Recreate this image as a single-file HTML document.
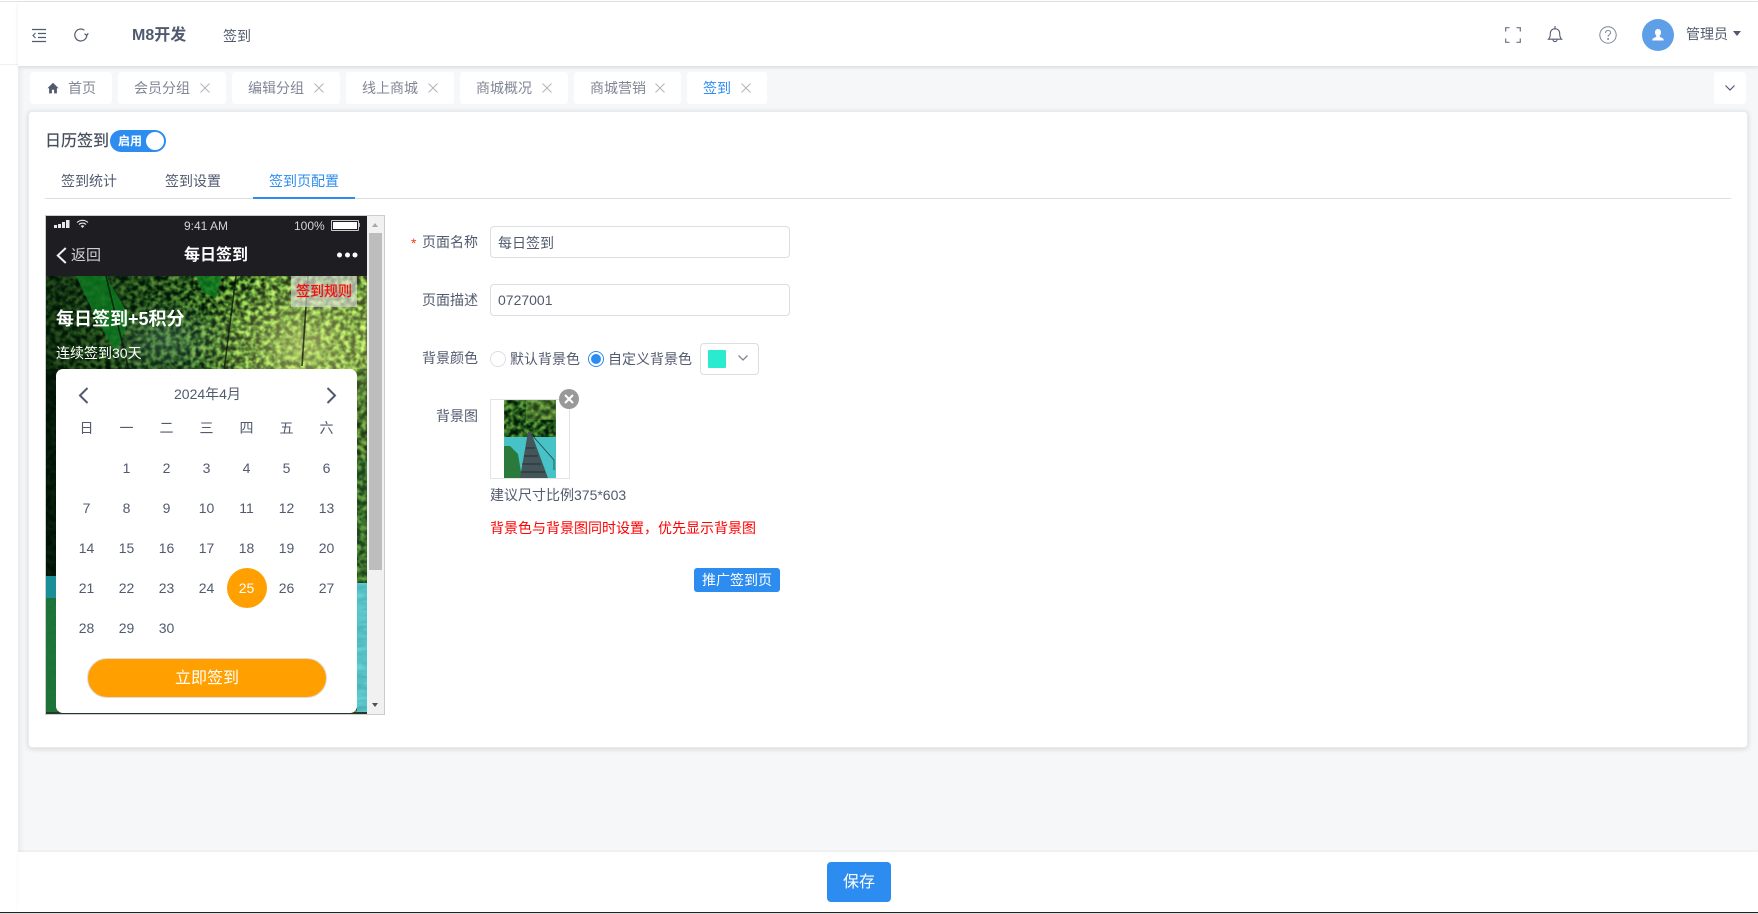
<!DOCTYPE html>
<html lang="zh">
<head>
<meta charset="utf-8">
<title>签到</title>
<style>
html,body{margin:0;padding:0;width:1758px;height:914px;overflow:hidden;background:#fff;}
body{position:relative;font-family:"Liberation Sans","Noto Sans CJK SC",sans-serif;font-size:14px;color:#515a6e;}
.a{position:absolute;}
.t{position:absolute;white-space:nowrap;line-height:20px;height:20px;}
.tag{position:absolute;top:72px;height:32px;background:#fff;border-radius:3px;}
.tag span{position:absolute;top:6px;line-height:20px;white-space:nowrap;color:#808695;}
.tag svg{position:absolute;top:11px;}
.lbl{position:absolute;right:1280px;white-space:nowrap;line-height:20px;height:20px;color:#515a6e;}
.inp{position:absolute;left:490px;width:298px;height:30px;border:1px solid #dcdee2;border-radius:4px;background:#fff;line-height:30px;padding:0;text-indent:7px;color:#515a6e;}
.cal{position:absolute;left:66.5px;top:408px;width:280px;display:grid;grid-template-columns:repeat(7,40px);grid-auto-rows:40px;color:#515a6e;text-align:center;line-height:40px;}
</style>
</head>
<body>
<svg width="0" height="0" style="position:absolute">
<defs>
<filter id="leaf" x="0" y="0" width="100%" height="100%" color-interpolation-filters="sRGB">
<feTurbulence type="fractalNoise" baseFrequency=".2" numOctaves="4" seed="11"/>
<feColorMatrix values="2.1 0 0 0 -.78  2.7 0 0 0 -.88  1.1 0 0 0 -.4  0 0 0 0 1"/>
<feGaussianBlur stdDeviation=".5"/>
</filter>
<filter id="water" x="0" y="0" width="100%" height="100%" color-interpolation-filters="sRGB">
<feTurbulence type="fractalNoise" baseFrequency=".05 .2" numOctaves="2" seed="3"/>
<feColorMatrix values=".2 0 0 0 .24  .2 0 0 0 .66  .2 0 0 0 .68  0 0 0 0 1"/>
</filter>
<linearGradient id="shade" x1="0" y1="0" x2="1" y2="0">
<stop offset="0" stop-color="#001a08" stop-opacity=".8"/>
<stop offset=".4" stop-color="#00240f" stop-opacity=".5"/>
<stop offset=".62" stop-color="#0a3010" stop-opacity=".12"/>
<stop offset="1" stop-color="#d0e070" stop-opacity=".25"/>
</linearGradient>
<radialGradient id="glow"><stop offset="0" stop-color="#e2f08a" stop-opacity=".62"/><stop offset="1" stop-color="#d7ea80" stop-opacity="0"/></radialGradient>
<radialGradient id="mid"><stop offset="0" stop-color="#8fc6a0" stop-opacity=".3"/><stop offset="1" stop-color="#8fc6a0" stop-opacity="0"/></radialGradient>
</defs>
</svg>

<!-- page chrome -->
<div class="a" style="left:0;top:1px;width:1758px;height:1px;background:#e4e4e4"></div>
<div class="a" style="left:0;top:64px;width:18px;height:1px;background:#f0f0f0"></div>
<div class="a" style="left:18px;top:66px;width:1740px;height:786px;background:#f5f7f9;box-shadow:inset 3px 2px 4px rgba(0,21,41,.05)"></div>
<div class="a" style="left:18px;top:2px;width:1740px;height:64px;background:#fff;box-shadow:0 1px 4px rgba(0,21,41,.08)"></div>

<!-- header left -->
<svg class="a" style="left:32px;top:28px" width="15" height="15" viewBox="0 0 15 15" fill="none" stroke="#515a6e" stroke-width="1.2">
<path d="M0 1.5h14M6 5.5h8M6 9.5h8M0 13.5h14"/><path d="M3.5 5 1 7.5 3.5 10" stroke-width="1.1"/>
</svg>
<svg class="a" style="left:73px;top:27px" width="16" height="16" viewBox="0 0 16 16" fill="none" stroke="#515a6e" stroke-width="1.2">
<path d="M13.8 8a6 6 0 1 1-2.400-4.800"/><path d="M15.300 6.300 13.700 8.400 11.500 6.700"/>
</svg>
<div class="t" style="left:132px;top:26px;font-size:16px;font-weight:bold;color:#515a6e">M8开发</div>
<div class="t" style="left:223px;top:26px">签到</div>

<!-- header right -->
<svg class="a" style="left:1505px;top:27px" width="16" height="16" viewBox="0 0 16 16" fill="none" stroke="#6a7284" stroke-width="1.200">
<path d="M.7 4.5V.7h3.8M11.5.7h3.8v3.8M15.3 11.5v3.8h-3.8M4.5 15.3H.7v-3.8"/>
</svg>
<svg class="a" style="left:1547px;top:25px" width="16" height="18" viewBox="0 0 16 18" fill="none" stroke="#515a6e" stroke-width="1.1">
<path d="M1.5 14.2c1.4-1.3 1.8-2.6 1.8-5.4 0-3 1.8-5 4.7-5s4.7 2 4.7 5c0 2.8.4 4.1 1.8 5.4z"/>
<path d="M8 1v2.8M6 14.6c0 1.2.9 2 2 2s2-.8 2-2"/>
</svg>
<svg class="a" style="left:1599px;top:26px" width="18" height="18" viewBox="0 0 18 18" fill="none" stroke="#808695" stroke-width="1">
<circle cx="9" cy="9" r="8.2"/><path d="M6.5 7c.1-1.6 1.2-2.5 2.6-2.5 1.5 0 2.5 1 2.5 2.2 0 1.8-2.5 1.9-2.5 3.9"/><circle cx="9.1" cy="13" r=".5" fill="#808695"/>
</svg>
<div class="a" style="left:1642px;top:19px;width:32px;height:32px;border-radius:50%;background:#5e9fe8"></div>
<svg class="a" style="left:1651px;top:28px" width="14" height="14" viewBox="0 0 14 14" fill="#fff">
<path d="M7 1c2 0 3 1.500 3 3.500 0 1.500-.7 2.700-1.400 3.400 0 .6.200 1 .9 1.300 1.500.5 2.800 1 3.200 2.300v1H1.300v-1c.4-1.300 1.700-1.800 3.200-2.300.7-.3.900-.7.900-1.300C4.700 7.200 4 6 4 4.500 4 2.500 5 1 7 1z"/>
</svg>
<div class="t" style="left:1686px;top:24px;color:#515a6e">管理员</div>
<div class="a" style="left:1733px;top:31px;width:0;height:0;border-left:4px solid transparent;border-right:4px solid transparent;border-top:5px solid #515a6e"></div>

<!-- tags -->
<div class="tag" style="left:30px;width:82px">
<svg style="left:17px;top:10px" width="12" height="12" viewBox="0 0 12 12" fill="#515a6e"><path d="M6 .8 .4 6.200h1.700V11.400h2.800V7.800h2.200v3.600h2.800V6.200h1.700z"/></svg>
<span style="left:38px">首页</span></div>
<div class="tag" style="left:118px;width:108px"><span style="left:16px">会员分组</span><svg style="left:82px" width="10" height="10" viewBox="0 0 10 10" stroke="#b0b4bb" fill="none"><path d="M.5.500l9 9M9.500.5l-9 9"/></svg></div>
<div class="tag" style="left:232px;width:108px"><span style="left:16px">编辑分组</span><svg style="left:82px" width="10" height="10" viewBox="0 0 10 10" stroke="#b0b4bb" fill="none"><path d="M.5.500l9 9M9.500.5l-9 9"/></svg></div>
<div class="tag" style="left:346px;width:108px"><span style="left:16px">线上商城</span><svg style="left:82px" width="10" height="10" viewBox="0 0 10 10" stroke="#b0b4bb" fill="none"><path d="M.5.500l9 9M9.500.5l-9 9"/></svg></div>
<div class="tag" style="left:460px;width:108px"><span style="left:16px">商城概况</span><svg style="left:82px" width="10" height="10" viewBox="0 0 10 10" stroke="#b0b4bb" fill="none"><path d="M.5.500l9 9M9.500.5l-9 9"/></svg></div>
<div class="tag" style="left:574px;width:107px"><span style="left:16px">商城营销</span><svg style="left:81px" width="10" height="10" viewBox="0 0 10 10" stroke="#b0b4bb" fill="none"><path d="M.5.500l9 9M9.500.5l-9 9"/></svg></div>
<div class="tag" style="left:687px;width:80px"><span style="left:16px;color:#2d8cf0">签到</span><svg style="left:54px" width="10" height="10" viewBox="0 0 10 10" stroke="#b0b4bb" fill="none"><path d="M.5.500l9 9M9.500.5l-9 9"/></svg></div>
<div class="tag" style="left:1714px;width:32px"><svg style="left:11px;top:13px" width="10" height="6" viewBox="0 0 10 6" fill="none" stroke="#515a6e" stroke-width="1.2"><path d="M.5.500 5 5 9.500.5"/></svg></div>

<!-- card -->
<div class="a" style="left:28px;top:111px;width:1718px;height:635px;background:#fff;border:1px solid #e8eaec;border-radius:4px;box-shadow:0 1px 6px rgba(0,0,0,.14)"></div>
<div class="t" style="left:45px;top:132px;font-size:16px;color:#454c5c;-webkit-text-stroke:.2px #454c5c">日历签到</div>
<div class="a" style="left:110px;top:130px;width:56px;height:22px;border-radius:11px;background:#2d8cf0"></div>
<div class="a" style="left:146px;top:132px;width:18px;height:18px;border-radius:50%;background:#fff"></div>
<div class="t" style="left:118px;top:131px;font-size:12px;font-weight:bold;color:#fff">启用</div>
<div class="t" style="left:61px;top:171px">签到统计</div>
<div class="t" style="left:165px;top:171px">签到设置</div>
<div class="t" style="left:269px;top:171px;color:#2d8cf0">签到页配置</div>
<div class="a" style="left:45px;top:198px;width:1686px;height:1px;background:#dcdee2"></div>
<div class="a" style="left:253px;top:197px;width:102px;height:2px;background:#2d8cf0"></div>

<!-- phone -->
<div class="a" style="left:45px;top:215px;width:338px;height:498px;border:1px solid #ccc;background:#f1f1f1"></div>
<div class="a" style="left:46px;top:216px;width:321px;height:498px;overflow:hidden;background:#1e1d22">
<svg class="a" style="left:0;top:60px" width="321" height="438" viewBox="0 0 321 438">
<rect width="321" height="438" filter="url(#leaf)"/>
<rect width="321" height="438" fill="url(#shade)"/>
<ellipse cx="255" cy="70" rx="105" ry="85" fill="url(#glow)"/>
<ellipse cx="120" cy="65" rx="70" ry="40" fill="url(#mid)"/>
<path d="M30 0h30l24 42-14 34-18-30zM150 0h26l-6 22-14-6z" fill="#0e7a20" opacity=".8"/>
<path d="M190 0l-12 95M262 0l-6 90M60 0l28 115" stroke="#0a140a" stroke-width="1.600" opacity=".75" fill="none"/>
<rect x="0" y="93" width="12" height="207" fill="#000f06" opacity=".72"/>
<rect x="311" y="93" width="10" height="90" fill="#0d3a18" opacity=".35"/>
<rect x="311" y="183" width="10" height="125" fill="#0b4a1e" opacity=".5"/>
<rect x="311" y="307" width="10" height="131" filter="url(#water)"/>
<rect x="0" y="300" width="12" height="22" fill="#1a8f98"/>
<rect x="0" y="322" width="12" height="114" fill="#1f7a3c" opacity=".92"/>
<rect x="0" y="436" width="321" height="2" fill="#26382c"/>
</svg>
</div>
<div class="a" style="left:367px;top:216px;width:16px;height:498px;background:#f1f1f1"></div>
<div class="a" style="left:369px;top:233px;width:13px;height:337px;background:#bdbdbd"></div>
<div class="a" style="left:372px;top:223px;width:0;height:0;border-left:3.500px solid transparent;border-right:3.500px solid transparent;border-bottom:4px solid #a8a8a8"></div>
<div class="a" style="left:372px;top:703px;width:0;height:0;border-left:3.500px solid transparent;border-right:3.500px solid transparent;border-top:4px solid #505050"></div>

<!-- status bar -->
<svg class="a" style="left:54px;top:219px" width="36" height="11" viewBox="0 0 36 11" fill="#e8e8e8">
<rect x="0" y="6" width="3" height="3"/><rect x="4" y="5" width="3" height="4"/><rect x="8" y="3" width="3" height="6"/><rect x="12" y="1" width="3.500" height="8"/>
<path d="M23 3.500a8 8 0 0 1 11 0M25 5.500a5 5 0 0 1 7 0" fill="none" stroke="#e8e8e8" stroke-width="1.100"/><path d="M28.500 9l-1.800-2a2.500 2.500 0 0 1 3.600 0z"/>
</svg>
<div class="t" style="left:184px;top:216px;font-size:12px;color:#d4d4d4">9:41 AM</div>
<div class="t" style="left:294px;top:216px;font-size:12px;color:#d4d4d4">100%</div>
<div class="a" style="left:331px;top:220px;width:26px;height:9px;border:1px solid #ccc;border-radius:1px;padding:0"><div style="margin:1px;height:7px;background:#fff"></div></div>
<div class="a" style="left:359px;top:223px;width:1px;height:4px;background:#aaa"></div>

<!-- nav -->
<svg class="a" style="left:56px;top:247px" width="11" height="17" viewBox="0 0 11 17" fill="none" stroke="#f0f0f0" stroke-width="2"><path d="M9.800 1 1.800 8.500l8 7.500"/></svg>
<div class="t" style="left:71px;top:246px;font-size:15px;color:#d0d0d0">返回</div>
<div class="t" style="left:184px;top:246px;font-size:16px;font-weight:bold;color:#fff">每日签到</div>
<svg class="a" style="left:335px;top:251px" width="24" height="8" viewBox="0 0 24 8" fill="#fff"><circle cx="4.500" cy="4" r="2.500"/><circle cx="12.500" cy="4" r="2.500"/><circle cx="20" cy="4" r="2.500"/></svg>

<!-- banner text -->
<div class="a" style="left:291px;top:276px;width:66px;height:31px;background:rgba(225,225,225,.62)"></div>
<div class="t" style="left:296px;top:281px;color:#f00;text-shadow:0 0 1px rgba(240,0,40,.6)">签到规则</div>
<div class="t" style="left:56px;top:309px;font-size:18px;font-weight:bold;color:#fff">每日签到+5积分</div>
<div class="t" style="left:56px;top:343px;color:#fff">连续签到30天</div>

<!-- calendar -->
<div class="a" style="left:56px;top:369px;width:301px;height:344px;background:#fff;border-radius:7px"></div>
<svg class="a" style="left:78px;top:387px" width="11" height="17" viewBox="0 0 11 17" fill="none" stroke="#515a6e" stroke-width="2"><path d="M9.500 1 2 8.500l7.500 7.500"/></svg>
<svg class="a" style="left:326px;top:387px" width="11" height="17" viewBox="0 0 11 17" fill="none" stroke="#515a6e" stroke-width="2"><path d="M1.500 1 9 8.500 1.500 16"/></svg>
<div class="t" style="left:174px;top:384px">2024年4月</div>
<div class="a" style="left:227px;top:568px;width:40px;height:40px;border-radius:50%;background:#ffa000"></div>
<div class="cal">
<div>日</div><div>一</div><div>二</div><div>三</div><div>四</div><div>五</div><div>六</div>
<div></div><div>1</div><div>2</div><div>3</div><div>4</div><div>5</div><div>6</div>
<div>7</div><div>8</div><div>9</div><div>10</div><div>11</div><div>12</div><div>13</div>
<div>14</div><div>15</div><div>16</div><div>17</div><div>18</div><div>19</div><div>20</div>
<div>21</div><div>22</div><div>23</div><div>24</div><div style="color:#fff">25</div><div>26</div><div>27</div>
<div>28</div><div>29</div><div>30</div>
</div>
<div class="a" style="left:87px;top:658px;width:238px;height:38px;border:1px solid #ddd;border-radius:20px;background:#ffa000;color:#fff;font-size:16px;line-height:39px;text-align:center">立即签到</div>

<!-- form -->
<div class="t" style="left:411px;top:233px;color:#ed4014;font-size:14px">*</div>
<div class="lbl" style="top:232px">页面名称</div>
<div class="inp" style="top:226px;line-height:32px">每日签到</div>
<div class="lbl" style="top:290px">页面描述</div>
<div class="inp" style="top:284px">0727001</div>
<div class="lbl" style="top:348px">背景颜色</div>
<div class="a" style="left:490px;top:351px;width:14px;height:14px;border:1px solid #dcdee2;border-radius:50%;background:#fff"></div>
<div class="t" style="left:510px;top:349px">默认背景色</div>
<div class="a" style="left:588px;top:351px;width:14px;height:14px;border:1px solid #2d8cf0;border-radius:50%;background:#fff"></div>
<div class="a" style="left:591px;top:354px;width:10px;height:10px;border-radius:50%;background:#2d8cf0"></div>
<div class="t" style="left:608px;top:349px">自定义背景色</div>
<div class="a" style="left:700px;top:343px;width:57px;height:30px;border:1px solid #dcdee2;border-radius:4px;background:#fff"></div>
<div class="a" style="left:708px;top:350px;width:18px;height:18px;background:#2aebcf;border-radius:1px"></div>
<svg class="a" style="left:738px;top:355px" width="10" height="6" viewBox="0 0 10 6" fill="none" stroke="#808695" stroke-width="1.300"><path d="M.5.500 5 5 9.500.5"/></svg>

<div class="lbl" style="top:406px">背景图</div>
<div class="a" style="left:490px;top:399px;width:78px;height:78px;border:1px solid #e3e3e3;background:#fff"></div>
<svg class="a" style="left:504px;top:400px" width="52" height="78" viewBox="0 0 52 78">
<rect width="52" height="38" filter="url(#leaf)"/>
<rect width="52" height="38" fill="#01300f" opacity=".45"/>
<rect x="22" width="30" height="20" fill="#c8e070" opacity=".2"/>
<rect y="37" width="52" height="41" fill="#47c3c8"/>
<path d="M0 46h6l8 8 4 24H0z" fill="#2a7a3c"/>
<path d="M24 32h3l17 46H16z" fill="#45565a"/>
<path d="M27 34l23 26v10" stroke="#2c3a3e" stroke-width=".8" fill="none"/>
<path d="M22 48h9M20 56h14M18 64h19M17 72h24" stroke="#252e30" stroke-width="1"/>
</svg>
<div class="a" style="left:559px;top:389px;width:20px;height:20px;border-radius:50%;background:#999"></div>
<svg class="a" style="left:564px;top:394px" width="10" height="10" viewBox="0 0 10 10" fill="none" stroke="#fff" stroke-width="2"><path d="M1 1l8 8M9 1l-8 8"/></svg>
<div class="t" style="left:490px;top:485px">建议尺寸比例375*603</div>
<div class="t" style="left:490px;top:517.5px;color:#f00">背景色与背景图同时设置，优先显示背景图</div>
<div class="a" style="left:694px;top:568px;width:86px;height:24px;background:#2d8cf0;border-radius:3px;color:#fff;line-height:24px;text-align:center">推广签到页</div>

<!-- footer -->
<div class="a" style="left:18px;top:852px;width:1740px;height:60px;background:#fff;box-shadow:0 -1px 3px rgba(0,0,0,.05)"></div>
<div class="a" style="left:827px;top:862px;width:64px;height:40px;background:#2d8cf0;border-radius:4px;color:#fff;font-size:16px;line-height:42px;text-align:center">保存</div>
<div class="a" style="left:0;top:912px;width:1758px;height:1px;background:#222"></div>
<div class="a" style="left:0;top:913px;width:1758px;height:1px;background:#ddd"></div>
</body>
</html>
